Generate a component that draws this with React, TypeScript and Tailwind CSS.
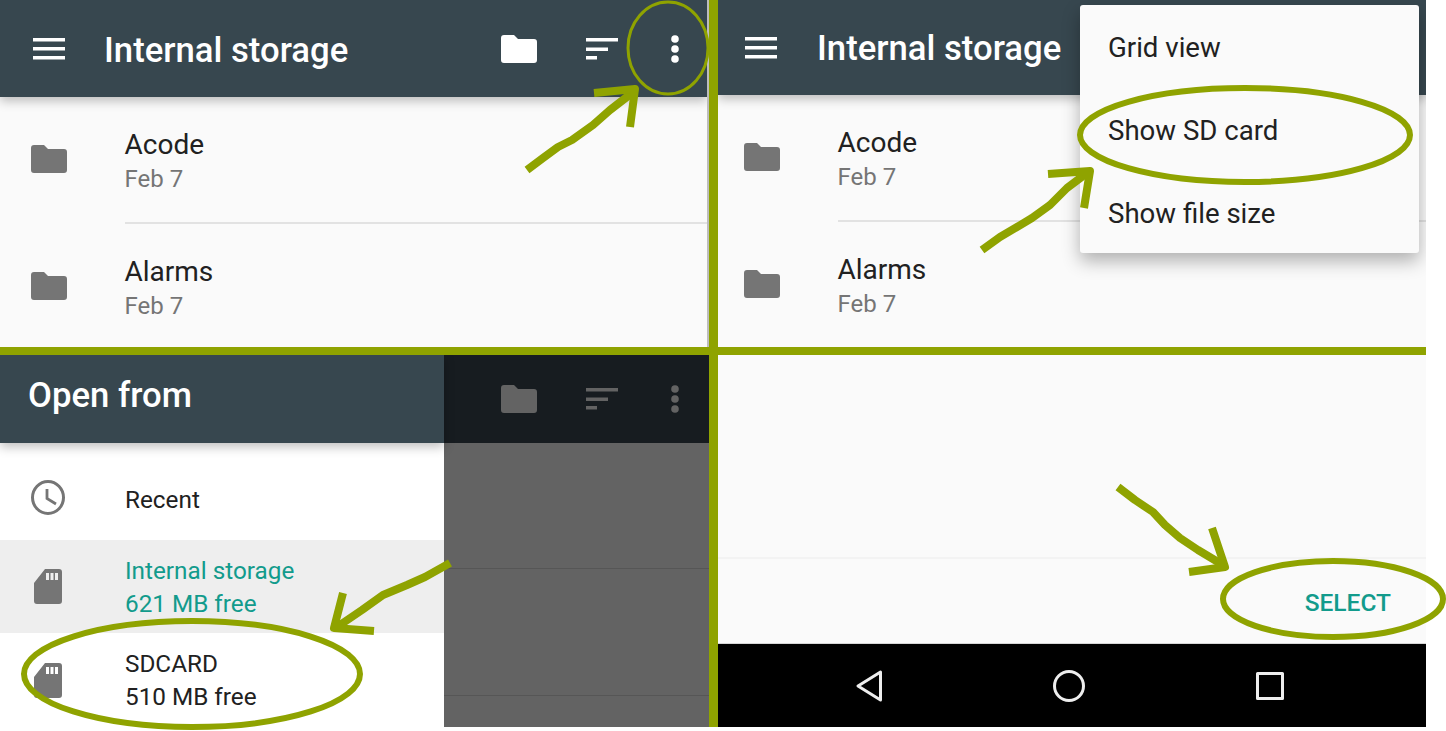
const OLIVE = "#8fa300"

function MenuIcon() {
  return (
    <svg viewBox="0 0 32 22" className="h-[22px] w-8 shrink-0" fill="#fff">
      <rect x="0" y="0" width="32" height="3.500" />
      <rect x="0" y="9" width="32" height="3.500" />
      <rect x="0" y="18" width="32" height="3.500" />
    </svg>
  )
}

function FolderIcon({ className, fill }: { className: string; fill: string }) {
  return (
    <svg viewBox="0 0 36 28" className={className} fill={fill}>
      <path d="M3 0h10l4 4h16a3 3 0 0 1 3 3v18a3 3 0 0 1-3 3H3a3 3 0 0 1-3-3V3a3 3 0 0 1 3-3z" />
    </svg>
  )
}

function SortIcon({ fill }: { fill: string }) {
  return (
    <svg viewBox="0 0 32 24" className="h-6 w-8" fill={fill}>
      <rect x="0" y="1" width="32" height="3.500" />
      <rect x="0" y="10.500" width="22" height="3.500" />
      <rect x="0" y="19" width="11" height="3.500" />
    </svg>
  )
}

function DotsIcon({ fill }: { fill: string }) {
  return (
    <svg viewBox="0 0 10 28" className="h-7 w-2.5" fill={fill}>
      <circle cx="5" cy="4" r="3.800" />
      <circle cx="5" cy="14" r="3.800" />
      <circle cx="5" cy="24" r="3.800" />
    </svg>
  )
}

function SdIcon() {
  return (
    <svg viewBox="0 0 28 35" className="h-[35px] w-7" fill="#757575">
      <path
        fillRule="evenodd"
        d="M11 0h14a3 3 0 0 1 3 3v29a3 3 0 0 1-3 3H3a3 3 0 0 1-3-3V14zM12 4v7h3V4zM16.500 4v7h3V4zM21 4v7h3V4z"
      />
    </svg>
  )
}

function ClockIcon() {
  return (
    <svg viewBox="0 0 34 35" className="mt-3 h-[35px] w-[34px]" fill="none" stroke="#757575">
      <ellipse cx="17" cy="17.500" rx="15.500" ry="16" strokeWidth="3" />
      <path d="M16 9v9.500l9 5.500" strokeWidth="2.800" />
    </svg>
  )
}

function FileRow({ name, indent, divider }: { name: string; indent: string; divider?: boolean }) {
  return (
    <div className="flex h-[127px]">
      <div className={`${indent} shrink-0 pt-12`}>
        <FolderIcon className="h-7 w-9" fill="#757575" />
      </div>
      <div className={`h-full flex-1 pt-[30px] ${divider ? "border-b-2 border-[#e2e2e2]" : ""}`}>
        <p className="text-[28px] leading-[35px] text-[#212121]">{name}</p>
        <p className="text-[24px] leading-[34px] text-[#757575]">Feb 7</p>
      </div>
    </div>
  )
}

function Header({
  height,
  inset,
  titleClass,
  children,
}: {
  height: string
  inset: string
  titleClass: string
  children?: React.ReactNode
}) {
  return (
    <header className={`relative z-10 flex ${height} ${inset} items-center bg-[#37474f] shadow-[0_4px_10px_rgba(0,0,0,0.25)]`}>
      <MenuIcon />
      <h1 className={`${titleClass} text-[34.700px] font-medium leading-none text-white`}>Internal storage</h1>
      {children}
    </header>
  )
}

function DrawerRow({
  icon,
  height,
  pad,
  active,
  lines,
}: {
  icon: React.ReactNode
  height: string
  pad?: string
  active?: boolean
  lines: string[]
}) {
  return (
    <div className={`flex ${height} items-center ${active ? "bg-[#eeeeee] text-[#129b8c]" : "bg-white text-[#212121]"}`}>
      <div className="flex w-[125px] justify-center pr-[29px]">{icon}</div>
      <div className={`${pad ?? ""} text-[24.300px] leading-[33px]`}>
        {lines.map((line) => (
          <p key={line}>{line}</p>
        ))}
      </div>
    </div>
  )
}

function Annotations() {
  const thick = { fill: "none", stroke: OLIVE, strokeWidth: 6 }
  const pen = { fill: "none", stroke: OLIVE, strokeWidth: 8, strokeLinejoin: "round" as const }
  return (
    <svg viewBox="0 0 1446 731" className="pointer-events-none absolute inset-0 z-30 h-[731px] w-[1446px]">
      <ellipse cx="668" cy="48" rx="40" ry="46" fill="none" stroke={OLIVE} strokeWidth="3" />
      <path {...pen} d="M527 170L543 158L558 147L572 140L593 125L610 110L632 93" />
      <path {...pen} d="M594 93L635 89L630 127" />

      <ellipse cx="1245" cy="135" rx="165" ry="47" {...thick} />
      <path {...pen} d="M982 250L1000 237L1017 227L1032 218L1050 205L1067 188L1087 173" />
      <path {...pen} d="M1048 174L1090 171L1084 208" />

      <ellipse cx="192" cy="674" rx="168" ry="53" {...thick} />
      <path {...pen} d="M450 563L425 577L407 585L383 595L362 610L337 627" />
      <path {...pen} d="M343 593L334 628L374 631" />

      <ellipse cx="1333" cy="599" rx="110" ry="38" {...thick} />
      <path {...pen} d="M1118 487L1135 500L1153 512L1165 525L1180 538L1198 550L1223 565" />
      <path {...pen} d="M1212 528L1225 567L1189 572" />
    </svg>
  )
}

export default function App() {
  return (
    <div
      className="relative h-[731px] w-[1446px] overflow-hidden bg-white"
      style={{ fontFamily: "Roboto, sans-serif" }}
    >
      <div className="grid grid-cols-[709px_9px_708px] grid-rows-[347px_8px_372px]">
        {/* top left: folder list */}
        <section className="overflow-hidden border-r-2 border-[#bdbdbd] bg-[#fafafa]">
          <Header height="h-[97px]" inset="pl-[33px]" titleClass="ml-[39px] pt-1">
            <div className="ml-auto flex items-center">
              <FolderIcon className="h-7 w-9" fill="#fff" />
              <div className="ml-[49px]">
                <SortIcon fill="#fff" />
              </div>
              <div className="ml-[52px] mr-[27px]">
                <DotsIcon fill="#fff" />
              </div>
            </div>
          </Header>
          <FileRow name="Acode" indent="w-[124.500px] pl-[31px]" divider />
          <FileRow name="Alarms" indent="w-[124.500px] pl-[31px]" />
        </section>

        <div className="bg-[#8fa300]" />

        {/* top right: overflow menu open */}
        <section className="relative overflow-hidden bg-[#fafafa]">
          <Header height="h-[95px]" inset="pl-[27px]" titleClass="ml-10 pt-0.5" />
          <FileRow name="Acode" indent="w-[119.500px] pl-[26px]" divider />
          <FileRow name="Alarms" indent="w-[119.500px] pl-[26px]" />
          <div className="absolute left-[362px] top-[5px] z-20 h-[248px] w-[339px] rounded-[3px] bg-[#fafafa] pl-7 pt-px shadow-[0_8px_18px_rgba(0,0,0,0.3)]">
            {["Grid view", "Show SD card", "Show file size"].map((label) => (
              <p key={label} className="flex h-[83px] items-center text-[27.600px] text-[#212121]">
                {label}
              </p>
            ))}
          </div>
        </section>

        <div className="col-span-3 bg-[#8fa300]" />

        {/* bottom left: drawer */}
        <section className="flex overflow-hidden">
          <div className="w-[444px] shrink-0 bg-white">
            <div className="relative z-10 flex h-[88px] items-center bg-[#37474f] pb-2 pl-7 shadow-[0_4px_10px_rgba(0,0,0,0.25)]">
              <h2 className="text-[34.700px] font-medium leading-none text-white">Open from</h2>
            </div>
            <DrawerRow icon={<ClockIcon />} height="h-[97px]" pad="pt-[15px]" lines={["Recent"]} />
            <DrawerRow icon={<SdIcon />} height="h-[93px]" pad="pt-px" active lines={["Internal storage", "621 MB free"]} />
            <DrawerRow icon={<SdIcon />} height="h-[94px]" lines={["SDCARD", "510 MB free"]} />
          </div>
          <div className="flex-1 bg-[#636363]">
            <div className="flex h-[88px] items-center bg-[#171c20] pl-[57px]">
              <FolderIcon className="h-7 w-9" fill="#636363" />
              <div className="ml-[49px]">
                <SortIcon fill="#636363" />
              </div>
              <div className="ml-[52px]">
                <DotsIcon fill="#636363" />
              </div>
            </div>
            <div className="h-[126px] border-b border-[#565656]" />
            <div className="h-[127px] border-b border-[#565656]" />
          </div>
        </section>

        <div className="bg-[#8fa300]" />

        {/* bottom right: select bar */}
        <section className="flex flex-col">
          <div className="h-[204px] border-b-2 border-[#f3f3f3] bg-[#fafafa]" />
          <div className="flex h-[85px] items-center justify-end border-b border-[#d6d6d6] bg-[#fafafa] pr-[35px] pt-1">
            <span className="text-[24.500px] font-medium text-[#129b8c]">SELECT</span>
          </div>
          <nav className="flex h-[83px] items-center justify-center gap-[171px] bg-black pr-[4px]">
            <svg viewBox="0 0 26 32" className="h-8 w-[26px]" fill="none" stroke="#eee" strokeWidth="3" strokeLinejoin="round">
              <path d="M24.500 2v28L2 16z" />
            </svg>
            <svg viewBox="0 0 32 32" className="h-8 w-8" fill="none" stroke="#eee" strokeWidth="3">
              <circle cx="16" cy="16" r="14.500" />
            </svg>
            <svg viewBox="0 0 28 28" className="h-7 w-7" fill="none" stroke="#eee" strokeWidth="3" strokeLinejoin="round">
              <rect x="1.500" y="1.500" width="25" height="25" />
            </svg>
          </nav>
        </section>
      </div>
      <Annotations />
    </div>
  )
}
